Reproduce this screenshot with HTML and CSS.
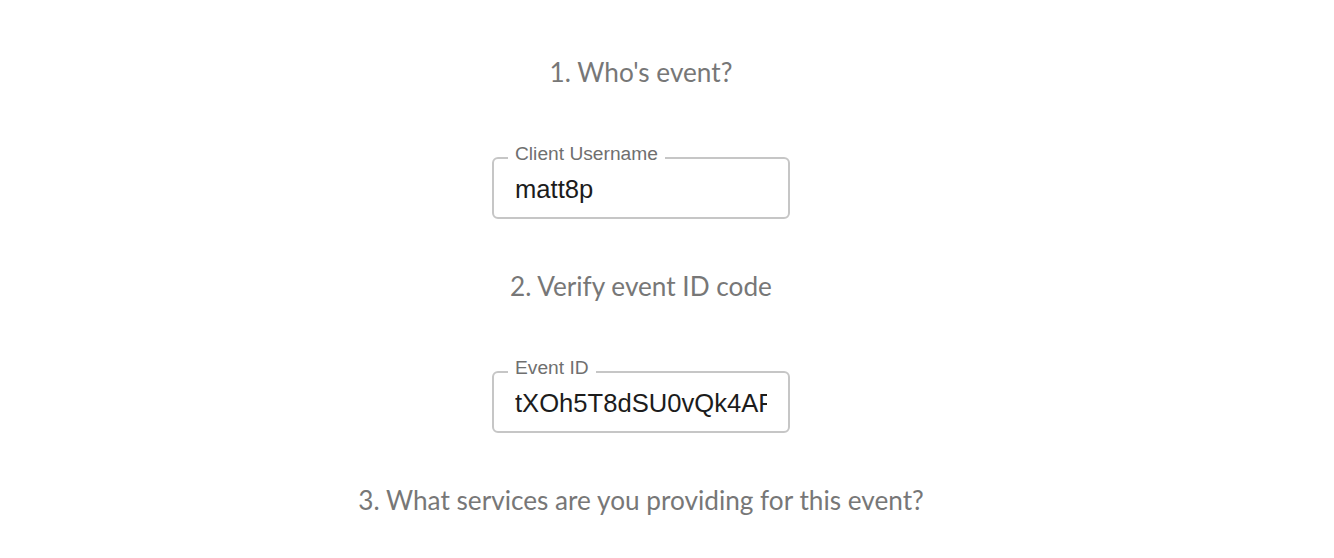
FILE: index.html
```html
<!DOCTYPE html>
<html lang="en">
<head>
<meta charset="utf-8">
<title>Event setup</title>
<link rel="stylesheet" href="styles.css">
</head>
<body>
<main class="page">
  <section class="step">
    <h2 class="step-title">1. Who's event?</h2>
    <fieldset class="field">
      <legend class="field-label">Client Username</legend>
      <input class="field-input" type="text" value="matt8p">
    </fieldset>
  </section>
  <section class="step">
    <h2 class="step-title">2. Verify event ID code</h2>
    <fieldset class="field">
      <legend class="field-label">Event ID</legend>
      <input class="field-input" type="text" value="tXOh5T8dSU0vQk4AFq7Lz2">
    </fieldset>
  </section>
  <section class="step">
    <h2 class="step-title">3. What services are you providing for this event?</h2>
  </section>
</main>
</body>
</html>
```

FILE: styles.css
```css
html, body {
  margin: 0;
  padding: 0;
  background: #ffffff;
}

.page {
  width: 1282px;
  padding-top: 56px;
  display: flex;
  flex-direction: column;
  align-items: center;
}

.step {
  display: flex;
  flex-direction: column;
  align-items: center;
}

.step-title {
  margin: 0 0 56px;
  font-family: Lato, "Noto Sans", sans-serif;
  font-weight: 400;
  font-size: 26.2px;
  line-height: 32px;
  color: #777777;
  text-align: center;
}

.field {
  box-sizing: border-box;
  width: 298px;
  margin: 0 0 51px;
  padding: 0;
  border: 2px solid #c6c6c6;
  border-radius: 6px;
  min-width: 0;
}

.field-label {
  margin-left: 14px;
  padding: 0 7px 8px;
  font-family: "Liberation Sans", Arial, sans-serif;
  font-size: 19.2px;
  line-height: 20px;
  color: #6f6f6f;
}

.field-input {
  display: block;
  box-sizing: border-box;
  width: 100%;
  height: 45px;
  margin: 0;
  padding: 2px 21px 13px 21px;
  border: 0;
  outline: none;
  background: transparent;
  font-family: "Liberation Sans", Arial, sans-serif;
  font-size: 25.6px;
  line-height: 30px;
  color: #1c1c1c;
}
```
